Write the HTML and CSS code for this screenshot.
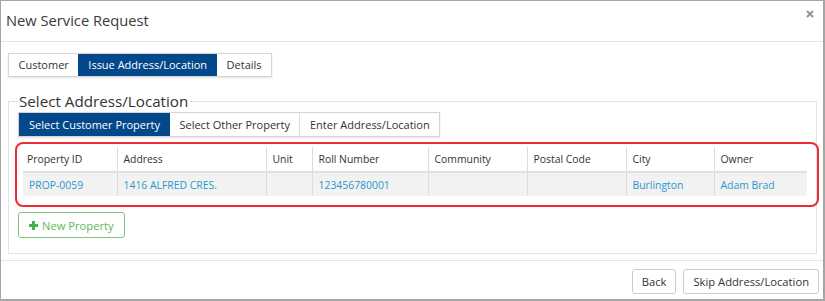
FILE: index.html
```html
<!DOCTYPE html>
<html lang="en">
<head>
    <meta charset="UTF-8">
    <title>New Service Request</title>
    <link rel="stylesheet" href="styles.css">
</head>
<body>
    <div class="modal">
        <div class="modal_head">
            <h4>New Service Request</h4>
            <span class="close">
                <svg width="8" height="8" viewBox="0 0 8 8"><path d="M1 1L7 7M7 1L1 7" stroke="#9a9a9a" stroke-width="2.2"/></svg>
            </span>
        </div>
        <div class="modal_body">
            <ul class="steps">
                <li>Customer</li>
                <li class="on">Issue Address/Location</li>
                <li>Details</li>
            </ul>
            <fieldset class="box">
                <legend>Select Address/Location</legend>
                <ul class="steps sub">
                    <li class="on">Select Customer Property</li>
                    <li>Select Other Property</li>
                    <li>Enter Address/Location</li>
                </ul>
                <div class="mark">
                    <table class="grid">
                        <colgroup>
                            <col style="width:94px"><col style="width:149px"><col style="width:46px"><col style="width:116px">
                            <col style="width:99px"><col style="width:99px"><col style="width:88px"><col style="width:93px">
                        </colgroup>
                        <thead>
                            <tr>
                                <th>Property ID</th>
                                <th>Address</th>
                                <th>Unit</th>
                                <th>Roll Number</th>
                                <th>Community</th>
                                <th>Postal Code</th>
                                <th>City</th>
                                <th>Owner</th>
                            </tr>
                        </thead>
                        <tbody>
                            <tr>
                                <td><a href="#">PROP-0059</a></td>
                                <td><a href="#">1416 ALFRED CRES.</a></td>
                                <td></td>
                                <td><a href="#">123456780001</a></td>
                                <td></td>
                                <td></td>
                                <td><a href="#">Burlington</a></td>
                                <td><a href="#">Adam Brad</a></td>
                            </tr>
                        </tbody>
                    </table>
                </div>
                <button class="btn add">
                    <svg width="9" height="9" viewBox="0 0 9 9"><path d="M3 0h3v3h3v3H6v3H3V6H0V3h3z" fill="#4cae4c"/></svg>
                    New Property
                </button>
            </fieldset>
        </div>
        <div class="modal_foot">
            <button class="btn">Back</button>
            <button class="btn">Skip Address/Location</button>
        </div>
    </div>
</body>
</html>
```

FILE: styles.css
```css
* {margin: 0; padding: 0; box-sizing: border-box;}
body {
    font-family: "Open Sans", "Liberation Sans", sans-serif;
    color: #333;
    background: #fff;
}
ul {list-style: none;}
a {color: #2a97cb; text-decoration: none;}
.modal {
    width: 825px;
    height: 301px;
    border: 1px solid #a5a5a5;
    border-right-width: 2px;
    border-bottom-width: 2px;
    display: flex;
    flex-direction: column;
}
.modal_head {
    height: 42px;
    border-bottom: 1px solid #e5e5e5;
    display: flex;
    align-items: center;
    justify-content: space-between;
    padding: 0 9px 0 5px;
}
.modal_head h4 {
    font-size: 14.7px;
    font-weight: normal;
    color: #3a3a3a;
    margin-top: -3px;
}
.close {
    display: flex;
    margin-top: -15px;
}
.modal_body {
    padding: 10px 6px 6px 7px;
    flex: 1;
}
.steps {
    display: inline-flex;
    border: 1px solid #d4d4d4;
    box-shadow: 0 1px 2px rgba(0,0,0,0.12);
    height: 24px;
    font-size: 11px;
}
.steps li {
    padding: 0 9.5px;
    line-height: 22px;
    border-left: 1px solid #ddd;
}
.steps li:first-child {border-left: 0;}
.steps li.on {
    background: #03488a;
    color: #fff;
    border-left: 0;
    padding: 0 10px;
}
.steps li.on + li {border-left: 0;}
.box {
    border: 1px solid #e3e3e3;
    margin-top: 14px;
    padding: 0 9px 15px 9px;
    min-width: 0;
}
.box legend {
    font-size: 15.2px;
    padding: 0 2px 0 1px;
    line-height: 20px;
}
.sub {
    height: 25px;
    margin-top: 1px;
}
.sub li {line-height: 23px;}
.mark {
    border: 2px solid #ec2b33;
    border-radius: 8px;
    margin: 5px -12px 0 -3px;
    padding: 3px 9px 9px 6px;
}
.grid {
    width: 784px;
    border-collapse: collapse;
    table-layout: fixed;
    font-size: 10.4px;
}
.grid th {
    font-weight: normal;
    text-align: left;
    height: 25px;
    padding: 0 6px;
    border-left: 1px solid #ddd;
    border-bottom: 2px solid #e2e2e2;
    color: #333;
}
.grid th:first-child {padding-left: 4px;}
.grid td {
    height: 24px;
    padding: 0 6px;
    background: #f2f2f2;
    border-left: 1px solid #ddd;
}
.grid th:first-child, .grid td:first-child {border-left: 0;}
.btn {
    font-family: inherit;
    font-size: 11.2px;
    background: #fff;
    color: #333;
    border: 1px solid #ccc;
    border-radius: 3px;
    height: 25px;
    padding: 0 9px;
    display: inline-flex;
    align-items: center;
    gap: 4px;
}
.add {
    margin-top: 5px;
    height: 26px;
    border-color: #7fc47f;
    color: #5cb85c;
    padding: 0 10px;
}
.modal_foot {
    border-top: 1px solid #e5e5e5;
    height: 39px;
    display: flex;
    justify-content: flex-end;
    align-items: flex-start;
    gap: 7px;
    padding: 8px 4px 0 0;
}
```
